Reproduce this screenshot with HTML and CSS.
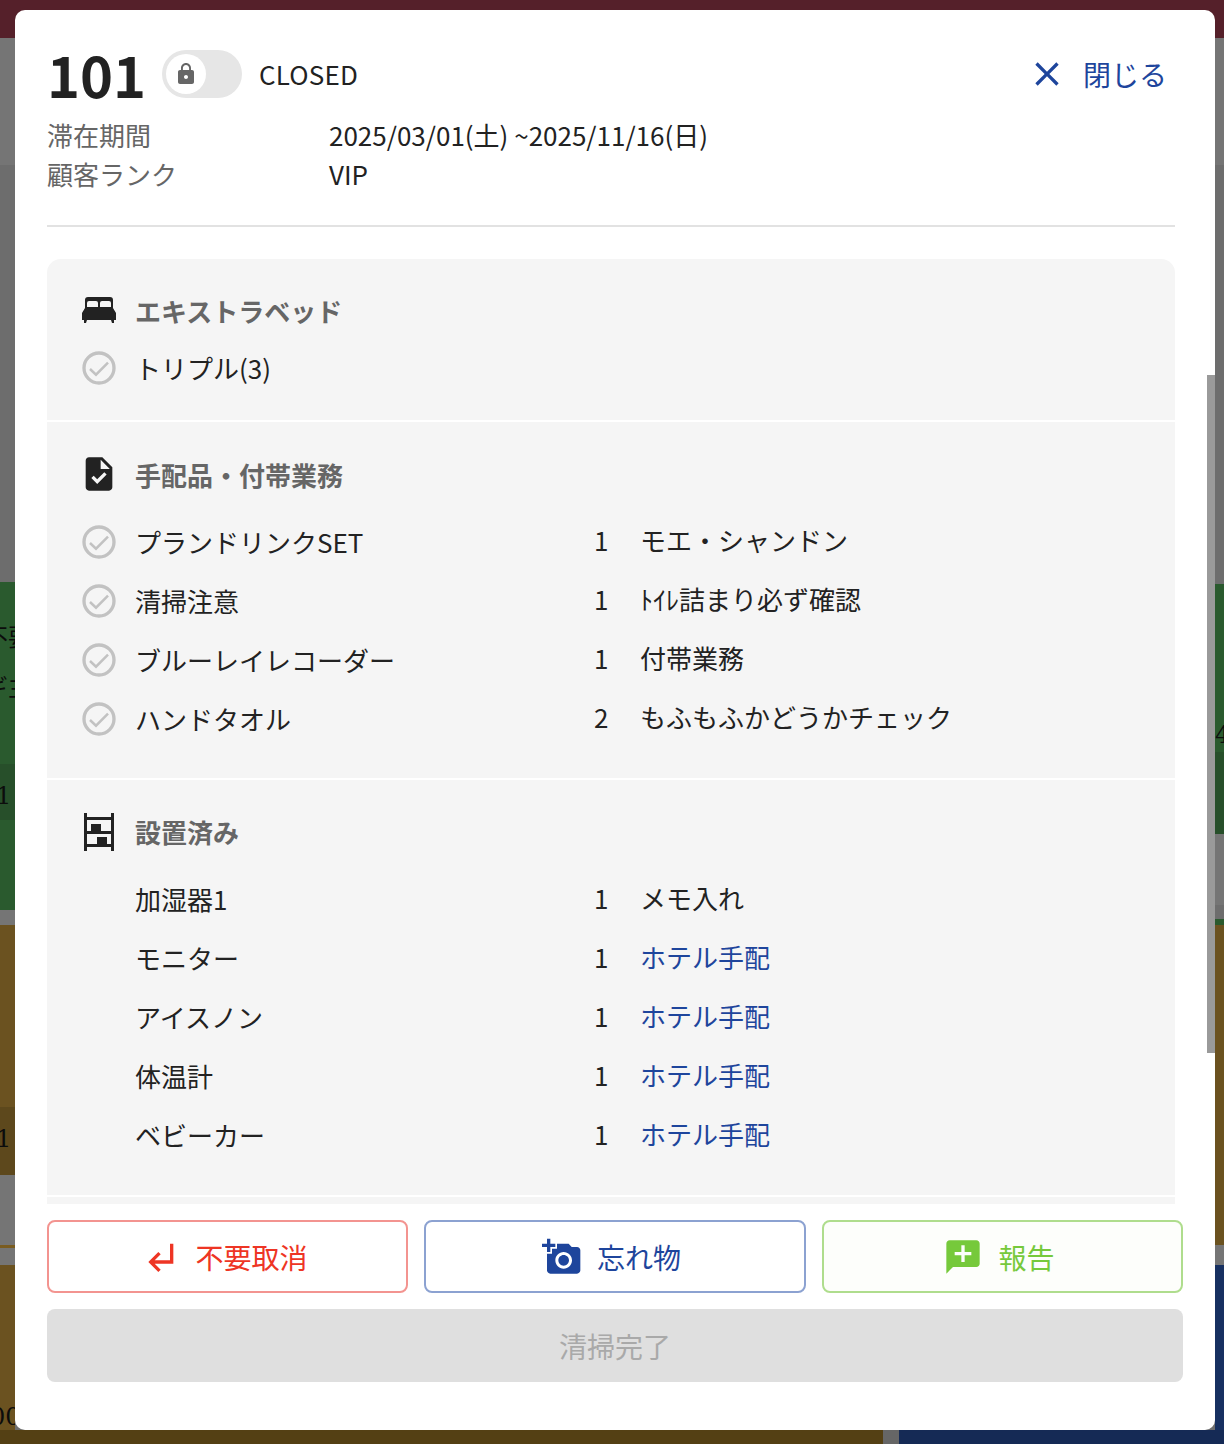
FILE: index.html
```html
<!DOCTYPE html>
<html lang="ja">
<head>
  <meta charset="UTF-8" />
  <meta name="viewport" content="width=device-width, initial-scale=1.0"/>
  <title>101 CLOSED</title>
  <link rel="stylesheet" href="styles.css">
</head>
<body>
  <!-- room board behind the modal, only the edges show -->
  <div class="backdrop">
    <div class="top-bar"></div>
    <div class="board">
      <div class="side side-left">
        <div class="band grey h127"></div>
        <div class="band grey2 h417"></div>
        <div class="band green h182"><span class="frag frag-a">不要</span><span class="frag frag-b">ギ主</span></div>
        <div class="band green-dark h56"><span class="num">1</span></div>
        <div class="band green h90"></div>
        <div class="band grey h15"></div>
        <div class="band brown h182"></div>
        <div class="band brown-dark h68"><span class="num">1</span></div>
        <div class="band grey h70"></div>
        <div class="band line h3"></div>
        <div class="band grey h17"></div>
        <div class="band brown h165"><span class="num num-low">00</span></div>
      </div>
      <div class="side side-right">
        <div class="band grey h127"></div>
        <div class="band grey2 h419"></div>
        <div class="band green h168"><span class="num-r">4</span></div>
        <div class="band green-dark h82"></div>
        <div class="band grey h71"></div>
        <div class="band green-line h20"></div>
        <div class="band brown h320"></div>
        <div class="band grey h20"></div>
        <div class="band navy h165"></div>
      </div>
    </div>
    <div class="bottom-bar">
      <div class="bottom-brown"></div>
      <div class="bottom-gap"></div>
      <div class="bottom-navy"></div>
    </div>
  </div>

  <div class="modal">
    <header class="modal-head">
      <div class="title-row">
        <div class="room-no">101</div>
        <div class="toggle">
          <span class="knob">
            <svg class="lock" viewBox="0 0 24 24"><path d="M18 8h-1V6c0-2.76-2.24-5-5-5S7 3.24 7 6v2H6c-1.1 0-2 .9-2 2v10c0 1.1.9 2 2 2h12c1.1 0 2-.9 2-2V10c0-1.1-.9-2-2-2zm-6 9c-1.1 0-2-.9-2-2s.9-2 2-2 2 .9 2 2-.9 2-2 2zm3.1-9H8.9V6c0-1.71 1.39-3.1 3.1-3.1 1.71 0 3.1 1.39 3.1 3.1v2z"/></svg>
          </span>
        </div>
        <div class="state">CLOSED</div>
        <div class="close">
          <svg class="icon" viewBox="0 0 24 24"><path d="M19 6.41L17.59 5 12 10.59 6.41 5 5 6.41 10.59 12 5 17.59 6.41 19 12 13.41 17.59 19 19 17.59 13.41 12z"/></svg>
          <span>閉じる</span>
        </div>
      </div>
      <div class="meta"><span class="meta-label">滞在期間</span><span>2025/03/01(土) ~2025/11/16(日)</span></div>
      <div class="meta"><span class="meta-label">顧客ランク</span><span>VIP</span></div>
    </header>

    <div class="scroll">
      <div class="panel">
        <section class="section sec-extra">
          <h3 class="sec-title">
            <svg class="icon-bed" viewBox="0 0 34 26"><path fill-rule="evenodd" d="M6 0H28a3 3 0 0 1 3 3V11L34 16V23H32V26H30L29 23H5L4 26H2V23H0V16L3 11V3a3 3 0 0 1 3-3ZM5 10H16V6a2 2 0 0 0-2-2H7a2 2 0 0 0-2 2ZM18 10H29V6a2 2 0 0 0-2-2H20a2 2 0 0 0-2 2Z"/></svg>
            <span>エキストラベッド</span>
          </h3>
          <div class="row">
            <svg class="check" viewBox="0 0 24 24"><circle cx="12" cy="12" r="9"/><polyline points="6.6,12.6 10.2,16 17.4,8.8"/></svg>
            <span class="name">トリプル(3)</span>
          </div>
        </section>

        <section class="section sec-tasks">
          <h3 class="sec-title">
            <svg class="icon dark" viewBox="0 0 24 24"><path d="M14 2H6c-1.1 0-1.99.9-1.99 2L4 20c0 1.1.89 2 1.99 2H18c1.1 0 2-.9 2-2V8l-6-6zm-3.06 16L7.4 14.46l1.41-1.41 2.12 2.12 4.24-4.24 1.41 1.41L10.94 18zM13 9V3.5L18.5 9H13z"/></svg>
            <span>手配品・付帯業務</span>
          </h3>
          <div class="row">
            <svg class="check" viewBox="0 0 24 24"><circle cx="12" cy="12" r="9"/><polyline points="6.6,12.6 10.2,16 17.4,8.8"/></svg>
            <span class="name">プランドリンクSET</span><span class="qty">1</span><span class="note">モエ・シャンドン</span>
          </div>
          <div class="row">
            <svg class="check" viewBox="0 0 24 24"><circle cx="12" cy="12" r="9"/><polyline points="6.6,12.6 10.2,16 17.4,8.8"/></svg>
            <span class="name">清掃注意</span><span class="qty">1</span><span class="note">ﾄｲﾚ詰まり必ず確認</span>
          </div>
          <div class="row">
            <svg class="check" viewBox="0 0 24 24"><circle cx="12" cy="12" r="9"/><polyline points="6.6,12.6 10.2,16 17.4,8.8"/></svg>
            <span class="name">ブルーレイレコーダー</span><span class="qty">1</span><span class="note">付帯業務</span>
          </div>
          <div class="row">
            <svg class="check" viewBox="0 0 24 24"><circle cx="12" cy="12" r="9"/><polyline points="6.6,12.6 10.2,16 17.4,8.8"/></svg>
            <span class="name">ハンドタオル</span><span class="qty">2</span><span class="note">もふもふかどうかチェック</span>
          </div>
        </section>

        <section class="section sec-placed">
          <h3 class="sec-title">
            <svg class="icon-shelf" viewBox="0 0 30 38">
              <rect x="0" y="0" width="3" height="38"/><rect x="27" y="0" width="3" height="38"/>
              <rect x="0" y="4" width="30" height="3"/><rect x="0" y="18" width="30" height="3"/><rect x="0" y="31" width="30" height="3"/>
              <rect x="7" y="11" width="10" height="7"/><rect x="13" y="24" width="10" height="7"/>
            </svg>
            <span>設置済み</span>
          </h3>
          <div class="row"><span class="spacer"></span><span class="name">加湿器1</span><span class="qty">1</span><span class="note">メモ入れ</span></div>
          <div class="row"><span class="spacer"></span><span class="name">モニター</span><span class="qty">1</span><span class="note link">ホテル手配</span></div>
          <div class="row"><span class="spacer"></span><span class="name">アイスノン</span><span class="qty">1</span><span class="note link">ホテル手配</span></div>
          <div class="row"><span class="spacer"></span><span class="name">体温計</span><span class="qty">1</span><span class="note link">ホテル手配</span></div>
          <div class="row"><span class="spacer"></span><span class="name">ベビーカー</span><span class="qty">1</span><span class="note link">ホテル手配</span></div>
        </section>

        <section class="section sec-rest"></section>
      </div>
      <div class="scrollbar"></div>
    </div>

    <footer class="actions">
      <div class="btn-row">
        <button class="btn btn-red">
          <svg class="icon" viewBox="0 0 24 24"><path d="M11 9l1.42 1.42L8.83 14H18V4h2v12H8.83l3.59 3.58L11 21l-6-6 6-6z"/></svg>
          <span>不要取消</span>
        </button>
        <button class="btn btn-blue">
          <svg class="icon" viewBox="0 0 24 24"><path d="M3 4V1h2v3h3v2H5v3H3V6H0V4h3zm3 6V7h3V4h7l1.83 2H21c1.1 0 2 .9 2 2v12c0 1.1-.9 2-2 2H5c-1.1 0-2-.9-2-2V10h3zm7 9c2.76 0 5-2.24 5-5s-2.24-5-5-5-5 2.24-5 5 2.24 5 5 5zm-3.2-5c0 1.77 1.43 3.2 3.2 3.2s3.2-1.43 3.2-3.2-1.43-3.2-3.2-3.2-3.2 1.43-3.2 3.2z"/></svg>
          <span>忘れ物</span>
        </button>
        <button class="btn btn-green">
          <svg class="icon" viewBox="0 0 24 24"><path d="M20 2H4c-1.1 0-1.99.9-1.99 2L2 22l4-4h14c1.1 0 2-.9 2-2V4c0-1.1-.9-2-2-2zm-3 9h-4v4h-2v-4H7V9h4V5h2v4h4v2z"/></svg>
          <span>報告</span>
        </button>
      </div>
      <button class="btn-done" disabled>清掃完了</button>
    </footer>
  </div>
</body>
</html>
```

FILE: styles.css
```css
* {
  box-sizing: border-box;
}

html, body {
  margin: 0;
  padding: 0;
}

body {
  position: relative;
  width: 1224px;
  height: 1444px;
  overflow: hidden;
  font-family: "Noto Sans CJK JP", "Noto Sans", sans-serif;
  font-size: 26px;
  color: #222;
}

/* backdrop */
.backdrop {
  display: flex;
  flex-direction: column;
  height: 1444px;
  background: #6f6f6f;
}

.top-bar {
  height: 38px;
  background: #55202a;
  flex: none;
}

.board {
  display: flex;
  justify-content: space-between;
  height: 1392px;
  flex: none;
}

.side {
  overflow: hidden;
  font-family: "DejaVu Serif", serif;
  font-size: 24px;
  line-height: 1;
  color: #0c0c0c;
}

.side-left { width: 15px; }
.side-right { width: 9px; }

.band {
  position: relative;
  overflow: hidden;
}

.h3 { height: 3px; }
.h15 { height: 15px; }
.h17 { height: 17px; }
.h20 { height: 20px; }
.h56 { height: 56px; }
.h68 { height: 68px; }
.h70 { height: 70px; }
.h71 { height: 71px; }
.h82 { height: 82px; }
.h90 { height: 90px; }
.h127 { height: 127px; }
.h165 { height: 165px; }
.h168 { height: 168px; }
.h182 { height: 182px; }
.h320 { height: 320px; }
.h417 { height: 417px; }
.h419 { height: 419px; }

.grey { background: #757575; }
.grey2 { background: #6d6d6d; }
.green { background: #2a5a2e; }
.green-dark { background: #274f2a; }
.green-line { background: linear-gradient(#6d6d6d 0 70%, #2a5a2e 70%); }
.brown { background: #6b5220; }
.brown-dark { background: #5d481c; }
.line { background: #7a5c20; }
.navy { background: #173061; }

.num {
  position: absolute;
  left: -4px;
  top: 20px;
}

.num-low {
  top: 140px;
  left: -10px;
}

.num-r {
  position: absolute;
  left: 0;
  top: 139px;
}

.frag {
  position: absolute;
  left: -16px;
  white-space: nowrap;
  font-family: "Noto Sans CJK JP", sans-serif;
}

.frag-a { top: 42px; }
.frag-b { top: 92px; }

.bottom-bar {
  display: flex;
  height: 14px;
  flex: none;
}

.bottom-brown { width: 883px; background: #544014; }
.bottom-gap { width: 16px; background: #666; }
.bottom-navy { flex: 1; background: #152a55; }

/* modal */
.modal {
  position: absolute;
  left: 15px;
  top: 10px;
  width: 1200px;
  height: 1420px;
  background: #fff;
  border-radius: 10px;
  overflow: hidden;
}

.modal-head {
  margin: 0 40px 0 32px;
  height: 217px;
  border-bottom: 2px solid #e2e2e2;
}

.title-row {
  display: flex;
  align-items: center;
  height: 105px;
  padding-top: 28px;
}

.room-no {
  font-size: 56px;
  font-weight: 700;
  line-height: 78px;
  width: 115px;
  margin-top: -6px;
}

.toggle {
  width: 80px;
  height: 48px;
  padding: 4px;
  margin-top: -6px;
  border-radius: 24px;
  background: #e6e6e6;
}

.knob {
  display: flex;
  align-items: center;
  justify-content: center;
  width: 40px;
  height: 40px;
  border-radius: 50%;
  background: #fff;
}

.lock {
  width: 24px;
  height: 24px;
  fill: #666;
}

.state {
  margin-left: 17px;
  margin-top: -6px;
  letter-spacing: 0.2px;
}

.close {
  display: flex;
  align-items: center;
  gap: 16px;
  margin-left: auto;
  margin-right: 8px;
  margin-top: -6px;
  font-size: 28px;
  color: #1e459c;
}

.icon {
  width: 40px;
  height: 40px;
  fill: currentColor;
  flex: none;
}

.meta {
  display: flex;
  height: 39px;
  line-height: 39px;
}

.meta-label {
  width: 282px;
  color: #666;
}

.scroll {
  position: relative;
  height: 945px;
  margin-top: 32px;
  overflow: hidden;
}

.panel {
  margin: 0 40px 0 32px;
  border-radius: 14px 14px 0 0;
  overflow: hidden;
}

.section {
  background: #f5f5f5;
  margin-bottom: 2px;
}

.sec-title {
  display: flex;
  align-items: center;
  gap: 16px;
  height: 40px;
  margin: 0;
  font-size: 26px;
  font-weight: 700;
  color: #666;
}

.sec-title .dark {
  fill: #222;
}

.icon-bed {
  width: 34px;
  height: 26px;
  margin: 0 3px;
  fill: #222;
  flex: none;
}

.icon-shelf {
  width: 30px;
  height: 38px;
  margin: 2px 5px 0;
  fill: #222;
  flex: none;
}

.sec-extra {
  padding: 31px 32px 23px;
}

.sec-extra .sec-title {
  margin-bottom: 8px;
}

.sec-tasks {
  padding: 32px 32px 30px;
}

.sec-tasks .sec-title {
  margin-bottom: 18px;
}

.sec-placed {
  padding: 31px 32px;
}

.sec-placed .sec-title {
  margin-bottom: 18px;
}

.sec-placed .qty,
.sec-placed .note {
  margin-top: -2px;
}

.sec-rest {
  height: 60px;
}

.row {
  display: flex;
  align-items: center;
  height: 59px;
}

.check {
  width: 40px;
  height: 40px;
  margin-right: 16px;
  flex: none;
  fill: none;
  stroke: #c2c2c2;
  stroke-width: 2;
}

.check polyline {
  stroke-width: 1.5;
}

.spacer {
  width: 56px;
  flex: none;
}

.name {
  width: 459px;
  flex: none;
}

.qty {
  width: 46px;
  flex: none;
  margin-top: -4px;
}

.note {
  margin-top: -4px;
}

.link {
  color: #1e459c;
}

.scrollbar {
  position: absolute;
  right: 0;
  top: 116px;
  width: 8px;
  height: 678px;
  background: #9a9a9a;
}

.actions {
  padding: 16px 32px 0;
}

.btn-row {
  display: flex;
  gap: 16px;
  margin-bottom: 16px;
}

.btn {
  display: flex;
  align-items: center;
  justify-content: center;
  gap: 15px;
  height: 73px;
  padding: 0 7px 0 0;
  border: 2px solid;
  border-radius: 8px;
  background: #fff;
  font-family: inherit;
  font-size: 28px;
  flex: none;
}

.btn-red {
  width: 361px;
  color: #ee3524;
  border-color: #f39490;
}

.btn-blue {
  width: 382px;
  color: #1e459c;
  border-color: #8ca2d1;
}

.btn-green {
  width: 361px;
  color: #76c93b;
  border-color: #afdd8d;
  background: #fdfefb;
}

.btn-done {
  display: block;
  width: 100%;
  height: 73px;
  border: 0;
  border-radius: 8px;
  background: #dfdfdf;
  color: #a9a9a9;
  font-family: inherit;
  font-size: 28px;
}
```
